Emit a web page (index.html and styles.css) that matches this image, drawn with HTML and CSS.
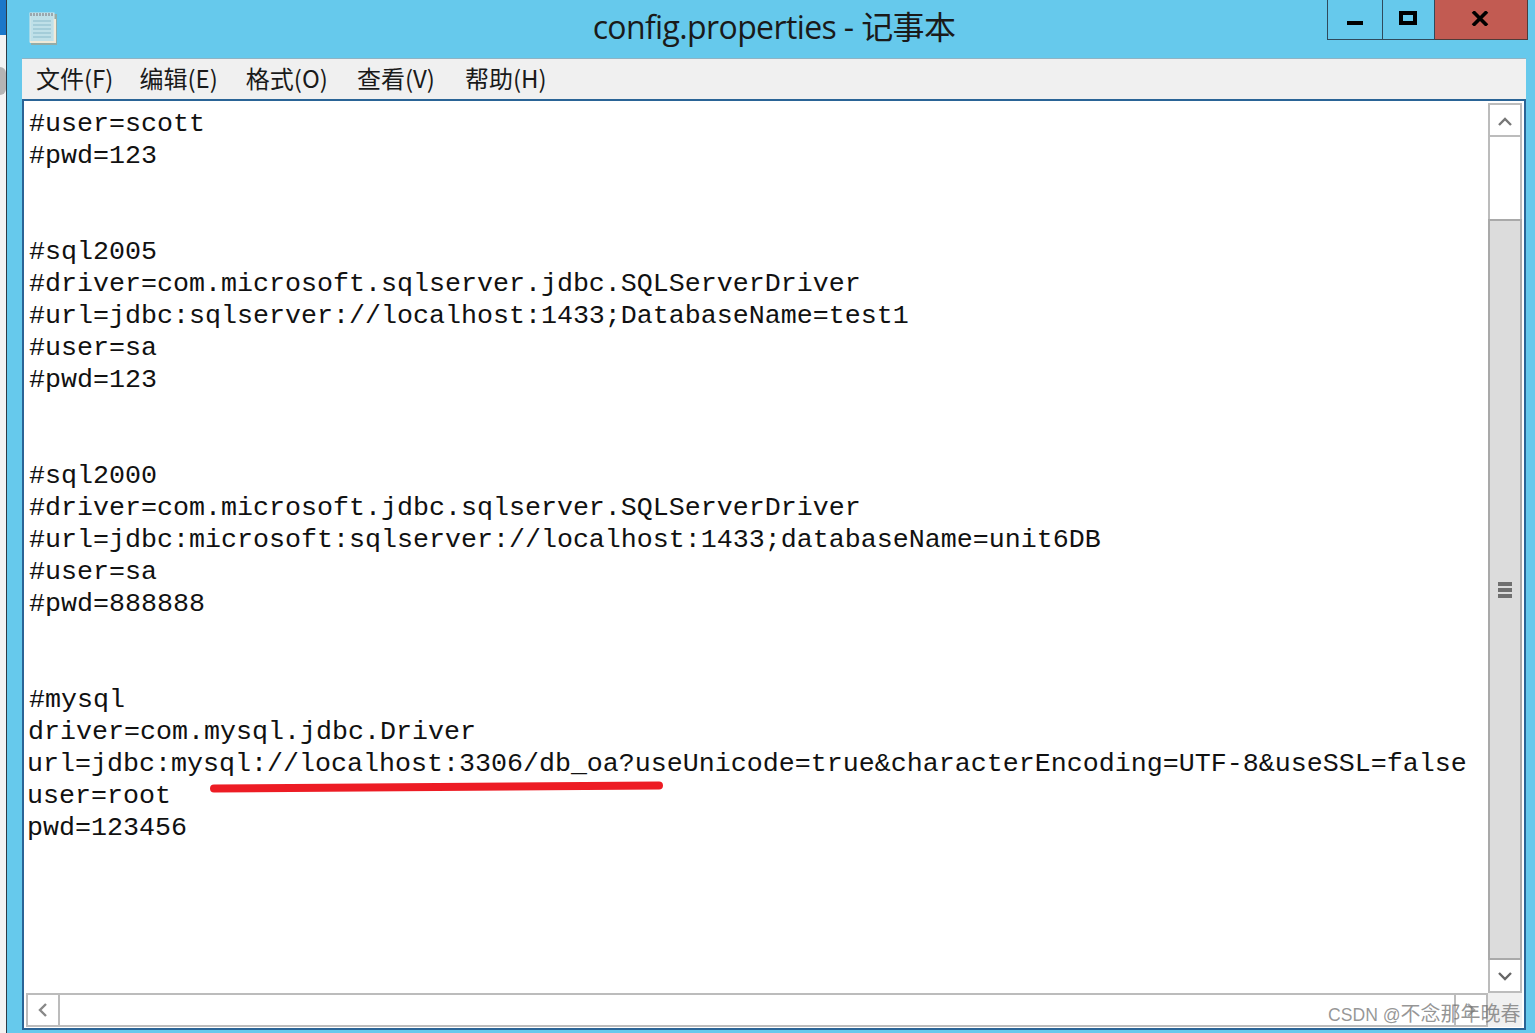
FILE: index.html
```html
<!DOCTYPE html>
<html lang="zh-CN">
<head>
<meta charset="utf-8">
<title>config.properties - 记事本</title>
<link rel="stylesheet" href="styles.css">
</head>
<body>
<div class="screen">
  <div class="desktop-edge">
    <div class="edge-blue"></div>
    <div class="edge-gap"></div>
    <div class="edge-mark"></div>
    <div class="edge-line"></div>
  </div>
  <div class="window">
    <header class="titlebar">
      <div class="title-left">
        <svg class="app-icon" width="30" height="34" viewBox="0 0 30 34">
          <rect x="3" y="3" width="26" height="31" fill="#a89f8a" opacity=".7"/>
          <rect x="2" y="2" width="24" height="29" fill="#bfe0e8"/>
          <rect x="2" y="2" width="24" height="29" fill="none" stroke="#d8e8e8" stroke-width="1"/>
          <path d="M5 10H23M5 14H23M5 18H23M5 22H23M5 26H23" stroke="#9cc6d4" stroke-width="1.5"/>
          <path d="M3 2V5M6 2V5M9 2V5M12 2V5M15 2V5M18 2V5M21 2V5M24 2V5" stroke="#8a8f96" stroke-width="1.4"/>
          <path d="M2 31H27V8" fill="none" stroke="#f0ead8" stroke-width="2"/>
        </svg>
      </div>
      <h1 class="title">config.properties - 记事本</h1>
      <div class="controls">
        <div class="ctl ctl-min"><span class="min-glyph"></span></div>
        <div class="ctl ctl-max"><span class="max-glyph"></span></div>
        <div class="ctl ctl-close">
          <svg width="18" height="15" viewBox="0 0 18 15"><path d="M2 0.5L16 14.5M16 0.5L2 14.5" stroke="#000" stroke-width="3.6" fill="none"/></svg>
        </div>
      </div>
    </header>
    <div class="frame">
      <nav class="menubar">
        <span class="menu-item m1">文件(F)</span>
        <span class="menu-item m2">编辑(E)</span>
        <span class="menu-item m3">格式(O)</span>
        <span class="menu-item m4">查看(V)</span>
        <span class="menu-item m5">帮助(H)</span>
      </nav>
      <div class="client">
        <div class="editor-row">
          <div class="editor">
            <pre class="code c1">#user=scott
#pwd=123


#sql2005
#driver=com.microsoft.sqlserver.jdbc.SQLServerDriver
#url=jdbc:sqlserver://localhost:1433;DatabaseName=test1
#user=sa
#pwd=123


#sql2000
#driver=com.microsoft.jdbc.sqlserver.SQLServerDriver
#url=jdbc:microsoft:sqlserver://localhost:1433;databaseName=unit6DB
#user=sa
#pwd=888888


#mysql</pre>
            <pre class="code c2">driver=com.mysql.jdbc.Driver</pre>
            <pre class="code c3">url=jdbc:mysql://localhost:3306/db_oa?useUnicode=true&amp;characterEncoding=UTF-8&amp;useSSL=false
user=root
pwd=123456</pre>
          </div>
          <div class="vscroll">
            <div class="sb-btn sb-up">
              <svg width="14" height="10" viewBox="0 0 14 10"><path d="M1 8L7 2L13 8" stroke="#777" stroke-width="2.4" fill="none"/></svg>
            </div>
            <div class="sb-track"></div>
            <div class="sb-thumb"><span class="grip"></span><span class="grip"></span><span class="grip"></span></div>
            <div class="sb-btn sb-down">
              <svg width="14" height="10" viewBox="0 0 14 10"><path d="M1 2L7 8L13 2" stroke="#666" stroke-width="2.4" fill="none"/></svg>
            </div>
          </div>
        </div>
        <div class="hscroll-row">
          <div class="hscroll">
            <div class="hb-btn">
              <svg width="10" height="14" viewBox="0 0 10 14"><path d="M8 1L2 7L8 13" stroke="#888" stroke-width="2.4" fill="none"/></svg>
            </div>
            <div class="hb-track"></div>
            <div class="hb-btn hb-right">
              <svg width="10" height="14" viewBox="0 0 10 14"><path d="M2 1L8 7L2 13" stroke="#aaa" stroke-width="2.4" fill="none"/></svg>
            </div>
          </div>
          <div class="corner"></div>
        </div>
      </div>
    </div>
  </div>
  <svg class="red-line" width="470" height="16" viewBox="0 0 470 16"><path d="M4 9.5L300 7.5L449 6.5" stroke="#ed1c24" stroke-width="8" stroke-linecap="round" fill="none"/></svg>
  <div class="watermark">CSDN @<span class="watermark-cjk">不念那年晚春</span></div>
</div>
</body>
</html>
```

FILE: styles.css
```css
* { box-sizing: border-box; }
html, body { margin: 0; padding: 0; background: #66c9ec; overflow: hidden; }
.screen { position: relative; display: flex; width: 1535px; height: 1033px; overflow: hidden; }

.desktop-edge { position: relative; width: 7px; height: 100%; background: #f3f3f3; border-right: 1px solid #2f3b45; flex: none; }
.edge-blue { height: 35px; background: #1b77c9; }
.edge-gap { height: 32px; }
.edge-mark { width: 6px; height: 28px; background: #b4b4b4; border-radius: 0 14px 14px 0; }
.edge-line { height: 1px; }

.window { flex: 1; display: flex; flex-direction: column; background: #66c9ec; min-width: 0; }

.titlebar { display: grid; grid-template-columns: 1fr auto 1fr; height: 58px; flex: none; }
.title-left { padding: 11px 0 0 21px; }
.app-icon { display: block; }
.title { margin: 0; padding: 5px 0 0 6px; font: 400 32px/44px "Open Sans", "Noto Sans CJK SC", sans-serif; letter-spacing: -0.62px; color: #1a1a1a; white-space: nowrap; }
.controls { display: flex; justify-self: end; align-items: flex-start; margin-right: 7px; }
.ctl { height: 40px; display: flex; justify-content: center; border: 1px solid #2f4a5c; border-top: 0; border-left: 0; }
.ctl-min { width: 56px; border-left: 1px solid #2f4a5c; padding-top: 21px; }
.ctl-max { width: 52px; padding: 11px 2px 0 0; }
.ctl-close { width: 93px; background: #c25b52; padding: 11px 2px 0 0; border-color: #4e3b3a; }
.min-glyph { width: 16px; height: 4px; background: #000; }
.max-glyph { width: 18px; height: 14px; border: 4px solid #000; }

.frame { flex: 1; display: flex; flex-direction: column; margin: 0 9px 3px 15px; min-height: 0; }
.menubar { height: 41px; flex: none; background: #f0f0f0; border-top: 1px solid #8fb3c4; display: flex; align-items: center; padding-bottom: 3px; font: 400 24px/38px "Noto Sans CJK SC", sans-serif; color: #1a1a1a; }
.menu-item { white-space: nowrap; }
.m1 { margin-left: 14px; }
.m2 { margin-left: 26px; }
.m3 { margin-left: 28px; }
.m4 { margin-left: 29px; }
.m5 { margin-left: 30px; }

.client { flex: 1; display: flex; flex-direction: column; background: #fff; border: 2px solid #2a6496; min-height: 0; padding-bottom: 1px; }
.editor-row { flex: 1; display: flex; min-height: 0; padding-top: 2px; }
.editor { flex: 1; min-width: 0; padding: 5px 0 0 5px; overflow: hidden; }
.code { margin: 0; font: 400 26.67px/32px "Liberation Mono", monospace; color: #111; white-space: pre; }
.c2 { margin-left: -1px; }
.c3 { margin-left: -2px; }

.vscroll { width: 34px; flex: none; margin-right: 2px; display: flex; flex-direction: column; }
.sb-btn { height: 34px; flex: none; border: 2px solid #bcbcbc; display: flex; align-items: center; justify-content: center; background: #fff; }
.sb-up { padding-top: 3px; }
.sb-track { height: 82px; flex: none; border: 2px solid #bcbcbc; border-width: 0 2px; background: #fff; }
.sb-thumb { flex: 1; background: #dcdcdc; border: 2px solid #a9a9a9; display: flex; flex-direction: column; align-items: center; justify-content: center; gap: 2px; }
.grip { width: 14px; height: 4px; background: #6f6f6f; }
.sb-down { height: 33px; border-top-width: 0; }

.hscroll-row { height: 34px; flex: none; display: flex; padding-left: 2px; margin-right: 2px; }
.hscroll { flex: 1; display: flex; border: 2px solid #bcbcbc; background: #fff; }
.hb-btn { width: 32px; flex: none; border-right: 2px solid #bcbcbc; display: flex; align-items: center; justify-content: center; }
.hb-right { border-right: 0; border-left: 2px solid #bcbcbc; }
.hb-track { flex: 1; }
.corner { width: 34px; flex: none; background: #f0f0f0; }

.red-line { position: absolute; left: 210px; top: 779px; }
.watermark { position: absolute; left: 1328px; top: 1001px; font: 400 17.6px/26px "Liberation Sans", "Noto Sans CJK SC", sans-serif; color: rgba(110, 110, 110, .72); white-space: nowrap; }
.watermark-cjk { font-size: 20px; }
```
